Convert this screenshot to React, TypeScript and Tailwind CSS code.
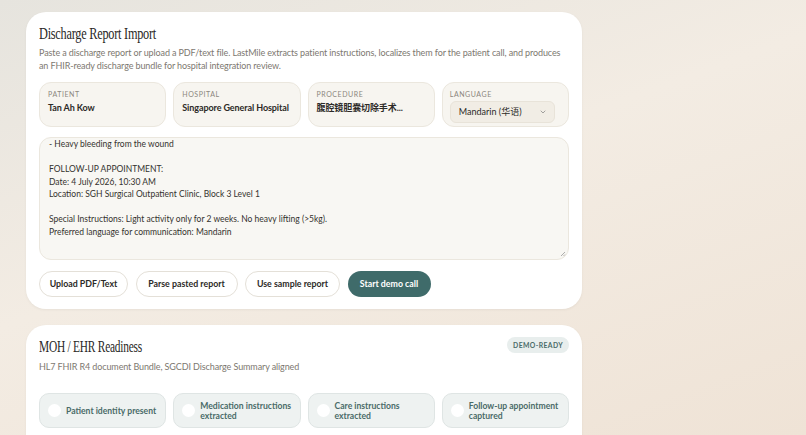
import { ChevronDown } from "lucide-react";

const sans = "font-['Lato','Noto_Sans_CJK_SC',sans-serif]";
const serif = "font-['Liberation_Serif','DejaVu_Serif',serif]";

function Field({ label, value }: { label: string; value: string }) {
  return (
    <div className="h-[45px] rounded-[12px] border border-[#ebe7de] bg-[#f7f5f0] px-[8px] pt-[7px]">
      <div className="text-[7px] leading-[9px] tracking-[0.08em] text-[#8c877e]">{label}</div>
      <div className="mt-[3px] whitespace-nowrap text-[9px] font-bold leading-[12px] tracking-[-0.01em] text-[#2c2a27]">{value}</div>
    </div>
  );
}

function Check({ label }: { label: string }) {
  return (
    <div className="flex h-[35px] items-center gap-[5px] rounded-[10px] border border-[#dfe5e4] bg-[#eef2f1] pl-[8px] pr-[6px]">
      <span className="h-[13px] w-[13px] shrink-0 rounded-full bg-white" />
      <span className="text-[8.6px] font-bold leading-[10px] text-[#4a6b68]">{label}</span>
    </div>
  );
}

export default function App() {
  const btn =
    "h-[26px] whitespace-nowrap rounded-full border border-[#e4e0d8] bg-white text-[8.8px] font-bold text-[#2c2a27]";

  return (
    <div className={`${sans} h-[435px] w-[806px] overflow-hidden bg-[linear-gradient(160deg,#e6e4de_0%,#f3ece3_45%,#efe3d6_100%)] px-[26px] pt-[12px]`}>
      <div className="w-[556px]">
        <section className="rounded-[20px] bg-white px-[13px] pb-[12px] pt-[12px] shadow-[0_1px_3px_rgba(0,0,0,0.05)]">
          <h2 className={`${serif} origin-left scale-x-[0.745] whitespace-nowrap text-[16.5px] leading-[20px] tracking-[-0.02em] text-[#2a2826]`}>Discharge Report Import</h2>
          <p className="mt-[2px] text-[9px] leading-[13px] tracking-[-0.012em] text-[#7d7870]">
            Paste a discharge report or upload a PDF/text file. LastMile extracts patient instructions, localizes them for the patient call, and produces an FHIR-ready discharge bundle for hospital integration review.
          </p>
          <div className="mt-[10px] grid grid-cols-4 gap-[7px]">
            <Field label="PATIENT" value="Tan Ah Kow" />
            <Field label="HOSPITAL" value="Singapore General Hospital" />
            <Field label="PROCEDURE" value="腹腔镜胆囊切除手术..." />
            <div className="h-[45px] rounded-[12px] border border-[#ebe7de] bg-[#f7f5f0] px-[7px] pt-[7px]">
              <div className="text-[7px] leading-[9px] tracking-[0.08em] text-[#8c877e]">LANGUAGE</div>
              <div className="mt-[2px] flex h-[22px] w-[105px] items-center justify-between rounded-[6px] border border-[#e8e3d9] bg-[#f1ede5] pl-[8px] pr-[7px] text-[9px] text-[#2c2a27]">
                <span>Mandarin (华语)</span>
                <ChevronDown className="h-[8px] w-[8px] text-[#777]" />
              </div>
            </div>
          </div>
          <div className="relative mt-[10px] h-[123px] overflow-hidden rounded-[12px] border border-[#ebe7de] bg-[#f8f7f3] px-[9px] pt-0 text-[8.5px] leading-[12.5px] text-[#34322e]">
            <div className="whitespace-pre">{`- Heavy bleeding from the wound

FOLLOW-UP APPOINTMENT:
Date: 4 July 2026, 10:30 AM
Location: SGH Surgical Outpatient Clinic, Block 3 Level 1

Special Instructions: Light activity only for 2 weeks. No heavy lifting (>5kg).
Preferred language for communication: Mandarin`}</div>
            <svg className="absolute bottom-[2px] right-[2px]" width="6" height="6" viewBox="0 0 6 6">
              <path d="M5 1L1 5M5 3.5L3.5 5" stroke="#999" strokeWidth="0.8" />
            </svg>
          </div>
          <div className="mt-[11px] flex gap-[7.5px]">
            <button className={`${btn} w-[89px]`}>Upload PDF/Text</button>
            <button className={`${btn} w-[102px]`}>Parse pasted report</button>
            <button className={`${btn} w-[95px]`}>Use sample report</button>
            <button className="h-[26px] w-[83px] whitespace-nowrap rounded-full bg-[#3f6b6a] text-[8.8px] font-bold text-white">Start demo call</button>
          </div>
        </section>

        <section className="mt-[16px] rounded-[20px] bg-white px-[13px] pb-[14px] pt-[12px] shadow-[0_1px_3px_rgba(0,0,0,0.05)]">
          <div className="flex items-start justify-between">
            <h2 className={`${serif} origin-left scale-x-[0.69] whitespace-nowrap text-[16.5px] leading-[20px] tracking-[-0.02em] text-[#2a2826]`}>MOH / EHR Readiness</h2>
            <span className="rounded-full bg-[#e8eeed] px-[6px] py-[3px] text-[6.8px] font-bold tracking-[0.06em] text-[#4a6b68]">DEMO-READY</span>
          </div>
          <p className="mt-[4px] text-[9px] leading-[12px] tracking-[-0.012em] text-[#7d7870]">HL7 FHIR R4 document Bundle, SGCDI Discharge Summary aligned</p>
          <div className="mt-[20px] grid grid-cols-4 gap-[7px]">
            <Check label="Patient identity present" />
            <Check label="Medication instructions extracted" />
            <Check label="Care instructions extracted" />
            <Check label="Follow-up appointment captured" />
            <Check label="Language preference" />
          </div>
        </section>
      </div>
    </div>
  );
}
